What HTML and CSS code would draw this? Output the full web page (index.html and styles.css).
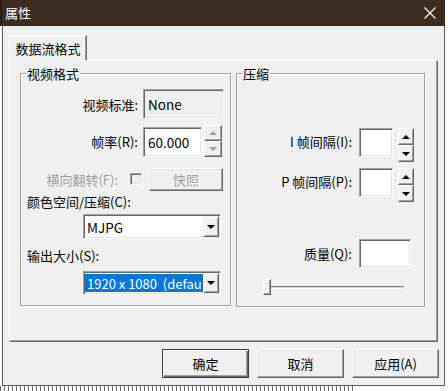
FILE: index.html
```html
<!DOCTYPE html>
<html lang="zh-CN">
  <head>
    <meta charset="UTF-8" />
    <title>属性</title>
    <link rel="stylesheet" href="styles.css">
  </head>
  <body>
    <div class="dialog">
      <div class="titlebar">
        <span class="title">属性</span>
        <svg class="close" width="12" height="12" viewBox="0 0 12 12">
          <path d="M0.5 0.5L11.5 11.5M11.5 0.5L0.5 11.5" stroke="#fff" stroke-width="1.1" fill="none" />
        </svg>
      </div>

      <div class="client">
        <div class="tabs">
          <div class="tab">数据流格式</div>
        </div>

        <div class="panel">
          <!-- video format -->
          <div class="group group-video">
            <div class="group-title">视频格式</div>

            <div class="row row-std">
              <span class="label">视频标准:</span>
              <div class="edit edit-readonly edit-std">None</div>
            </div>

            <div class="row row-rate">
              <span class="label">帧率(R):</span>
              <div class="edit edit-rate">60.000</div>
              <div class="spin spin-rate spin-disabled">
                <span class="spin-btn"><i class="arrow-up"></i></span>
                <span class="spin-btn"><i class="arrow-down"></i></span>
              </div>
            </div>

            <div class="row row-flip">
              <span class="label label-flip disabled">横向翻转(F):</span>
              <span class="checkbox"></span>
              <div class="btn btn-snap disabled">快照</div>
            </div>

            <div class="caption">颜色空间/压缩(C):</div>
            <div class="combo combo-color">
              <span class="combo-text">MJPG</span>
              <span class="combo-btn"><i class="arrow-down"></i></span>
            </div>

            <div class="caption caption-size">输出大小(S):</div>
            <div class="combo combo-size">
              <span class="combo-text selected">1920 x 1080&nbsp; (defau</span>
              <span class="combo-btn"><i class="arrow-down"></i></span>
            </div>
          </div>

          <!-- compression -->
          <div class="group group-comp">
            <div class="group-title">压缩</div>

            <div class="row row-iframe">
              <span class="label label-comp">I 帧间隔(I):</span>
              <div class="edit edit-small"></div>
              <div class="spin spin-comp">
                <span class="spin-btn"><i class="arrow-up"></i></span>
                <span class="spin-btn"><i class="arrow-down"></i></span>
              </div>
            </div>

            <div class="row row-pframe">
              <span class="label label-comp">P 帧间隔(P):</span>
              <div class="edit edit-small"></div>
              <div class="spin spin-comp">
                <span class="spin-btn"><i class="arrow-up"></i></span>
                <span class="spin-btn"><i class="arrow-down"></i></span>
              </div>
            </div>

            <div class="row row-quality">
              <span class="label label-comp">质量(Q):</span>
              <div class="edit edit-quality"></div>
            </div>

            <div class="slider">
              <span class="thumb"></span>
              <span class="track"></span>
            </div>
          </div>
        </div>

        <div class="buttons">
          <div class="btn btn-default">确定</div>
          <div class="btn">取消</div>
          <div class="btn">应用(A)</div>
        </div>
      </div>
    </div>
    <div class="desk"></div>
  </body>
</html>
```

FILE: styles.css
```css
* {
    margin: 0;
    padding: 0;
    box-sizing: border-box;
}

body {
    background-color: #fbfbfb;
    font-family: "Noto Sans CJK SC", "Liberation Sans", sans-serif;
    font-size: 13px;
    color: #000;
}

.dialog {
    width: 445px;
    height: 386px;
}

/* title bar */
.titlebar {
    height: 26px;
    background-color: #3b2c1f;
    border-left: 2px solid #2a1e14;
    color: #fff;
    display: flex;
    align-items: center;
    justify-content: space-between;
    padding: 0 9px 0 3px;
}
.title {
    font-size: 13px;
    line-height: 16px;
}
.close {
    display: block;
}

/* window body */
.client {
    margin-left: 2px;
    width: 443px;
    height: 360px;
    background-color: #f0f0f0;
    border: 1px solid #5c5c5c;
    border-top: none;
    padding: 9px 0 0 6px;
}

.tabs {
    display: flex;
}
.tab {
    position: relative;
    width: 78px;
    height: 26px;
    margin-bottom: -1px;
    background-color: #f0f0f0;
    border: 1px solid;
    border-color: #fff #696969 transparent #fff;
    box-shadow: inset -1px 0 0 #a0a0a0;
    display: flex;
    align-items: center;
    justify-content: center;
    padding-top: 1px;
}

.panel {
    width: 429px;
    height: 282px;
    border: 1px solid;
    border-color: #fff #696969 #696969 #fff;
    box-shadow: inset -1px -1px 0 #a0a0a0;
    padding: 12px 0 0 10px;
    display: flex;
    gap: 5px;
    align-items: flex-start;
}

/* group boxes */
.group {
    border: 1px solid #a0a0a0;
    box-shadow: 1px 1px 0 #fff, inset 1px 1px 0 #fff;
}
.group-video {
    width: 211px;
    height: 233px;
}
.group-comp {
    width: 189px;
    height: 234px;
}
.group-title {
    width: fit-content;
    height: 16px;
    line-height: 16px;
    margin: -8px 0 0 5px;
    padding: 0 1px;
    background-color: #f0f0f0;
}

.row {
    display: flex;
    align-items: center;
}
.label {
    width: 117px;
    margin-right: 5px;
    text-align: right;
    white-space: nowrap;
}
.disabled {
    color: #a0a0a0;
}

/* sunken edit boxes */
.edit {
    background-color: #fff;
    border: 1px solid;
    border-color: #a0a0a0 #fff #fff #a0a0a0;
    box-shadow: inset 1px 1px 0 #696969, inset -1px -1px 0 #e3e3e3;
    padding-left: 4px;
    display: flex;
    align-items: center;
    font-size: 13.5px;
}
.edit-readonly {
    background-color: #f0f0f0;
}

.row-std {
    margin-top: 7px;
    height: 30px;
}
.edit-std {
    width: 81px;
    height: 30px;
}

.row-rate {
    margin-top: 6px;
    height: 32px;
}
.edit-rate {
    width: 59px;
    height: 30px;
    align-self: flex-end;
}

/* spin buttons */
.spin {
    display: flex;
    flex-direction: column;
}
.spin-rate {
    width: 18px;
    height: 32px;
    margin-left: 2px;
}
.spin-btn {
    flex: 1;
    background-color: #f0f0f0;
    border: 1px solid;
    border-color: #fff #696969 #696969 #fff;
    box-shadow: inset -1px -1px 0 #a0a0a0;
    display: flex;
    align-items: center;
    justify-content: center;
}
.arrow-up {
    width: 0;
    height: 0;
    border-left: 4px solid transparent;
    border-right: 4px solid transparent;
    border-bottom: 4px solid #000;
}
.arrow-down {
    width: 0;
    height: 0;
    border-left: 4px solid transparent;
    border-right: 4px solid transparent;
    border-top: 4px solid #000;
}
.spin-disabled .arrow-up {
    border-bottom-color: #a0a0a0;
}
.spin-disabled .arrow-down {
    border-top-color: #a0a0a0;
}

/* flip row */
.row-flip {
    margin-top: 10px;
    height: 24px;
}
.label-flip {
    width: 97px;
    margin-right: 12px;
}
.checkbox {
    width: 12px;
    height: 12px;
    background-color: #f0f0f0;
    border: 1px solid;
    border-color: #a0a0a0 #fff #fff #a0a0a0;
    box-shadow: inset 1px 1px 0 #696969, inset -1px -1px 0 #e3e3e3;
}

/* raised buttons */
.btn {
    background-color: #f0f0f0;
    border: 1px solid;
    border-color: #fff #696969 #696969 #fff;
    box-shadow: inset -1px -1px 0 #a0a0a0, inset 1px 1px 0 #e3e3e3;
    display: flex;
    align-items: center;
    justify-content: center;
}
.btn-snap {
    width: 74px;
    height: 23px;
    margin-left: 7px;
}
.btn-snap.disabled {
    color: #a0a0a0;
    text-shadow: 1px 1px 0 #fff;
}

.caption {
    margin-top: 3px;
    height: 16px;
    line-height: 16px;
    padding-left: 6px;
}
.caption-size {
    margin-top: 9px;
}

/* combo boxes */
.combo {
    display: flex;
    width: 138px;
    margin-left: 62px;
    background-color: #fff;
    border: 1px solid;
    border-color: #a0a0a0 #fff #fff #a0a0a0;
    box-shadow: inset 1px 1px 0 #696969, inset -1px -1px 0 #e3e3e3;
    padding: 1px;
}
.combo-color {
    height: 25px;
    margin-top: 4px;
}
.combo-size {
    height: 24px;
    margin-top: 7px;
}
.combo-text {
    flex: 1;
    display: flex;
    align-items: center;
    padding-left: 2px;
    overflow: hidden;
    white-space: nowrap;
    font-size: 13.5px;
}
.combo-text.selected {
    margin: 1px 0;
    background-color: #0078d7;
    color: #fff;
    font-size: 13px;
}
.combo-btn {
    width: 16px;
    background-color: #f0f0f0;
    border: 1px solid;
    border-color: #f0f0f0 #696969 #696969 #f0f0f0;
    box-shadow: inset 1px 1px 0 #fff, inset -1px -1px 0 #a0a0a0;
    display: flex;
    align-items: center;
    justify-content: center;
}

/* compression group */
.label-comp {
    width: 115px;
    margin-right: 7px;
}
.row-iframe {
    margin-top: 46px;
    height: 34px;
    align-items: flex-start;
}
.row-pframe {
    margin-top: 6px;
    height: 34px;
    align-items: flex-start;
}
.row-iframe .label-comp,
.row-pframe .label-comp {
    line-height: 27px;
}
.edit-small {
    width: 34px;
    height: 29px;
}
.spin-comp {
    width: 16px;
    height: 34px;
    margin-left: 5px;
}
.row-quality {
    margin-top: 37px;
    height: 29px;
}
.edit-quality {
    width: 52px;
    height: 29px;
}

.slider {
    margin: 10px 0 0 26px;
    height: 17px;
    display: flex;
    align-items: center;
}
.thumb {
    width: 8px;
    height: 16px;
    background-color: #f0f0f0;
    border: 1px solid;
    border-color: #fff #696969 #696969 #fff;
    box-shadow: inset -1px -1px 0 #a0a0a0;
}
.track {
    width: 133px;
    height: 3px;
    margin-top: 1px;
    background-color: #d8d8d8;
    border-top: 1px solid #808080;
    border-bottom: 1px solid #fff;
}

/* dialog buttons */
.buttons {
    display: flex;
    gap: 8px;
    margin: 7px 0 0 153px;
}
.buttons .btn {
    width: 87px;
    height: 29px;
}
.btn-default {
    border-color: #3c3c3c;
    box-shadow: inset 1px 1px 0 #fff, inset -1px -1px 0 #696969, inset -2px -2px 0 #a0a0a0;
}

.desk {
    width: 355px;
    height: 5px;
    background: repeating-linear-gradient(90deg, #333 0 1px, transparent 1px 4px);
    opacity: 0.7;
}
```
